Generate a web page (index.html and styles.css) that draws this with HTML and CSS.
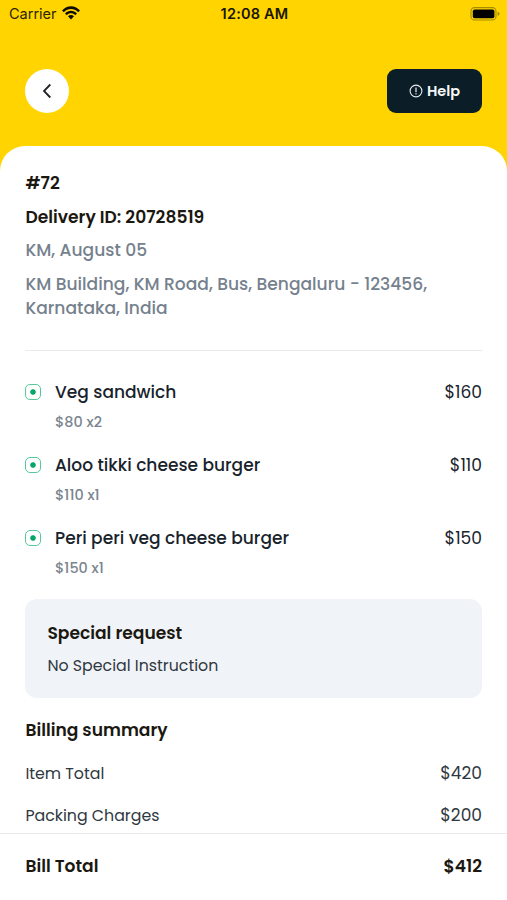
FILE: index.html
```html
<!DOCTYPE html>
<html lang="en">
<head>
<meta charset="utf-8">
<title>Order details</title>
<link rel="stylesheet" href="styles.css">
</head>
<body>
<div class="screen">
  <header class="top">
    <div class="status">
      <div class="carrier"><span>Carrier</span>
        <svg class="wifi" width="18" height="14" viewBox="0 0 18 14"><path d="M0 4.4C5-1.3 13-1.3 18 4.4L16.2 6.2C12.1 1.8 5.9 1.8 1.8 6.2ZM3 7.4C6.3 3.8 11.7 3.8 15 7.4L13.2 9.2C10.8 6.7 7.2 6.7 4.8 9.2ZM6 10.3C7.7 8.6 10.3 8.6 12 10.3L9 13.5Z"/></svg>
      </div>
      <div class="time">12:08 AM</div>
      <div class="power">
        <svg width="30" height="14" viewBox="0 0 30 14"><rect x="1" y=".6" width="25" height="12.4" rx="3.6" fill="none" stroke="#a58b00" stroke-width="1.1"/><rect x="2.8" y="2.4" width="21.6" height="8.8" rx="1.8"/><path d="M27.6 4.7Q29.6 5.4 29.6 6.8T27.6 8.900Z" fill="#a58b00"/></svg>
      </div>
    </div>
    <div class="actions">
      <button class="back" aria-label="Back"><svg width="10" height="16" viewBox="0 0 10 16"><path d="M8.3 1.5 2 8l6.3 6.5" fill="none" stroke="#202326" stroke-width="1.8"/></svg></button>
      <button class="help"><svg width="14" height="14" viewBox="0 0 14 14"><circle cx="7" cy="7" r="5.9" fill="none" stroke="#e9eef0" stroke-width="1.1"/><path d="M7 3.6v4.600M7 9.200v1.300" stroke="#e9eef0" stroke-width="1.2"/></svg><span>Help</span></button>
    </div>
  </header>
  <main class="sheet">
    <section class="order">
      <h1 class="strong">#72</h1>
      <h2 class="strong">Delivery ID: 20728519</h2>
      <p class="muted date">KM, August 05</p>
      <p class="muted address">KM Building, KM Road, Bus, Bengaluru - 123456, Karnataka, India</p>
    </section>
    <ul class="items">
      <li class="item"><i class="veg"></i><div class="info"><div class="name">Veg sandwich</div><div class="qty">$80 x2</div></div><div class="price">$160</div></li>
      <li class="item"><i class="veg"></i><div class="info"><div class="name">Aloo tikki cheese burger</div><div class="qty">$110 x1</div></div><div class="price">$110</div></li>
      <li class="item"><i class="veg"></i><div class="info"><div class="name">Peri peri veg cheese burger</div><div class="qty">$150 x1</div></div><div class="price">$150</div></li>
    </ul>
    <section class="request">
      <h3 class="strong">Special request</h3>
      <p class="plain">No Special Instruction</p>
    </section>
    <section class="billing">
      <h3 class="strong billing-title">Billing summary</h3>
      <div class="row"><span class="plain">Item Total</span><span class="amount">$420</span></div>
      <div class="row"><span class="plain">Packing Charges</span><span class="amount">$200</span></div>
    </section>
  </main>
  <footer class="total"><span class="strong">Bill Total</span><span class="strong">$412</span></footer>
</div>
</body>
</html>
```
FILE: styles.css
```css
* { box-sizing: border-box; margin: 0; padding: 0; }
body { background: #fff; font-family: Poppins, Inter, sans-serif; }
.screen { width: 507px; height: 900px; overflow: hidden; display: flex; flex-direction: column; background: #ffd401; }
.top { height: 146px; flex: none; }
.status { height: 28px; padding: 0 7px 0 9px; display: grid; grid-template-columns: 1fr auto 1fr; align-items: center; font: 14.5px/28px Inter, sans-serif; color: #2b2400; }
.carrier { display: flex; align-items: center; gap: 5px; }
.carrier svg { margin-top: -2px; }
.wifi { fill: #100d00; }
.time { font-weight: 600; letter-spacing: .2px; color: #191500; }
.power { display: flex; justify-content: flex-end; margin-top: -1px; }
.actions { margin-top: 41px; padding: 0 25px; display: flex; justify-content: space-between; }
button { border: 0; display: flex; align-items: center; justify-content: center; font-family: inherit; }
.back { width: 44px; height: 44px; border-radius: 50%; background: #fff; }
.help { width: 95px; height: 44px; border-radius: 9px; background: #0b1d26; color: #f4f7f8; gap: 4px; font-size: 14.5px; font-weight: 600; }
.sheet { flex: 1; min-height: 0; background: #fff; border-radius: 25px 25px 0 0; padding: 20px 25px 0 25.4px; overflow: hidden; }
.strong { font-size: 17.1px; line-height: 34px; font-weight: 600; color: #1b1811; }
.order { height: 185px; border-bottom: 1px solid #e8eaec; }
.muted { font-size: 17.1px; font-weight: 500; color: #75818d; }
.date { line-height: 33px; }
.address { line-height: 24px; padding-top: 5px; }
.items { list-style: none; padding-top: 29px; }
.item { height: 73px; display: flex; align-items: flex-start; }
.veg { width: 16px; height: 16px; margin: 4px 14px 0 -.4px; border: 1px solid #55c99b; border-radius: 5px; background: radial-gradient(circle, #07a568 2.3px, transparent 3.2px); }
.info { flex: 1; }
.name, .price { font-size: 17.05px; line-height: 25px; font-weight: 500; color: #18232b; }
.qty { margin-top: 5px; font-size: 14.4px; line-height: 24px; font-weight: 500; color: #7b858e; }
.price { font-weight: 400; }
.request { height: 99px; border-radius: 12px; background: #f0f4f8; padding: 17px 22px; }
.plain, .amount { font-size: 15.8px; line-height: 32px; color: #303840; }
.billing-title { height: 34px; line-height: 33px; margin-top: 16px; }
.row { display: flex; justify-content: space-between; height: 42px; padding-top: 10px; }
.amount { font-size: 17px; line-height: 30px; }
.total { height: 67px; flex: none; background: #fff; border-top: 1px solid #e8ebed; padding: 15px 25px 0 25.4px; display: flex; justify-content: space-between; }
```
